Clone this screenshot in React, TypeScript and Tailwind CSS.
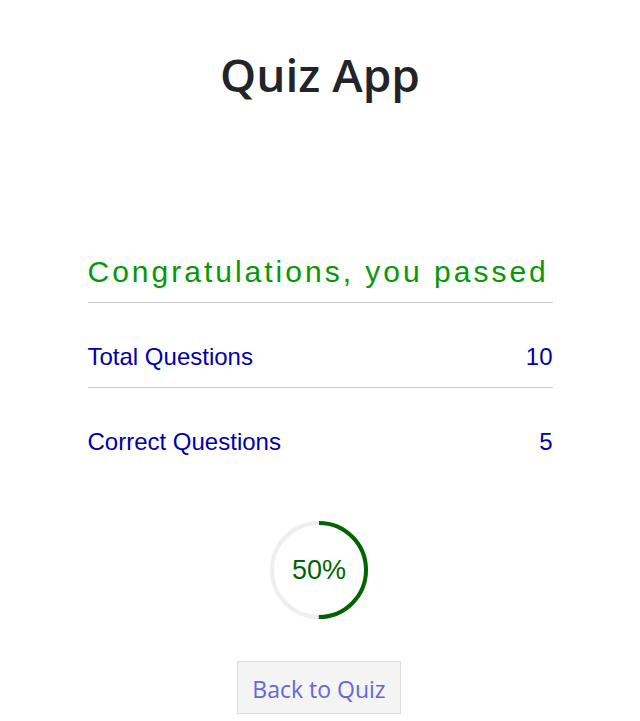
export default function App() {
  const total = 10;
  const correct = 5;
  const pct = Math.round((correct / total) * 100);
  const r = 47;
  const c = 2 * Math.PI * r;

  return (
    <div className="min-h-screen bg-white flex flex-col items-center">
      <h1 className="mt-[44px] text-[46px] leading-[60px] font-semibold text-[#212529] [font-family:'Open_Sans',sans-serif]">
        Quiz App
      </h1>

      <div className="w-[465px] mt-[148px] [font-family:'Liberation_Sans',Arial,sans-serif]">
        <h2 className="text-[30px] leading-[40px] tracking-[3px] whitespace-nowrap text-[#079707] pb-[10px] border-b border-[#cccccc]">
          Congratulations, you passed
        </h2>
        <div className="flex justify-between pt-[39px] pb-[15px] text-[24px] leading-[30px] text-[#0000a8] border-b border-[#cccccc]">
          <span>Total Questions</span>
          <span>{total}</span>
        </div>
        <div className="flex justify-between pt-[39px] pb-[15px] text-[24px] leading-[30px] text-[#0000a8]">
          <span>Correct Questions</span>
          <span>{correct}</span>
        </div>

        <div className="flex justify-center mt-[48px] pr-[2px]">
          <div className="relative w-[100px] h-[100px]">
            <svg width="100" height="100" viewBox="0 0 100 100">
              <circle cx="50" cy="50" r={r} fill="none" stroke="#eeeeee" strokeWidth="4" />
              <circle
                cx="50"
                cy="50"
                r={r}
                fill="none"
                stroke="#006400"
                strokeWidth="4"
                strokeDasharray={c}
                strokeDashoffset={c * (1 - pct / 100)}
                transform="rotate(-90 50 50)"
              />
            </svg>
            <div className="absolute inset-0 flex items-center justify-center text-[27px] text-[#006400]">
              {pct}%
            </div>
          </div>
        </div>

        <div className="flex justify-center mt-[41px] pr-[2px]">
          <button className="w-[164px] h-[53px] pt-[4px] bg-[#f4f4f4] border border-[#dddddd] text-[23px] text-[#6767d4] [font-family:'Open_Sans',sans-serif]">
            Back to Quiz
          </button>
        </div>
      </div>
    </div>
  );
}
